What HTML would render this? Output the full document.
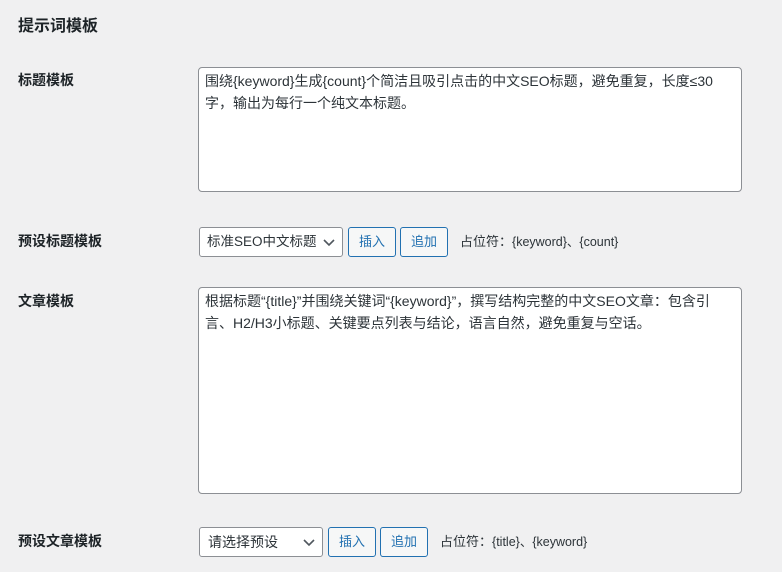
<!DOCTYPE html>
<html><head><meta charset="utf-8"><style>
body{margin:0;width:782px;height:572px;background:#f0f0f1;font-family:"Liberation Sans","Noto Sans CJK SC",sans-serif;color:#1d2327;position:relative;overflow:hidden}
.a{position:absolute;white-space:nowrap}
h2{position:absolute;left:18px;top:15px;margin:0;font-size:16px;font-weight:700;line-height:24px}
.l{font-size:14px;font-weight:700;line-height:20px;left:18px}
.ta{position:absolute;left:198px;width:530px;background:#fff;border:1px solid #8c8f94;border-radius:4px;padding:0 6px;font-size:14px;line-height:22px;color:#2c3338;box-sizing:content-box}
.sel{position:absolute;height:28px;border:1px solid #8c8f94;border-radius:3px;background:#fff;font-size:14px;line-height:28px;padding-left:8px;box-sizing:border-box;color:#2c3338}
.sel svg{position:absolute;right:7px;top:11px}
.btn{position:absolute;height:30px;width:48px;border:1px solid #2271b1;border-radius:3px;background:#f6f7f7;color:#2271b1;font-size:13px;line-height:28px;text-align:center;box-sizing:border-box}
.ph{font-size:13px;line-height:20px;color:#2c3338}
.ph span{font-size:12.5px}
</style></head><body>
<h2>提示词模板</h2>
<div class="a l" style="top:70px">标题模板</div>
<div class="ta" style="top:67px;padding-top:2px;height:121px">围绕{keyword}生成{count}个简洁且吸引点击的中文SEO标题，避免重复，长度≤30<br>字，输出为每行一个纯文本标题。</div>
<div class="a l" style="top:231px">预设标题模板</div>
<div class="sel" style="left:199px;top:227px;width:144px;height:30px;line-height:28px;padding-left:7px;font-size:13.5px">标准SEO中文标题<svg width="12" height="8" viewBox="0 0 12 8"><path d="M1 1l5 5 5-5" stroke="#50575e" stroke-width="1.6" fill="none"/></svg></div>
<div class="btn" style="left:348px;top:227px">插入</div>
<div class="btn" style="left:400px;top:227px">追加</div>
<div class="a ph" style="left:460px;top:232px">占位符：<span>{keyword}、{count}</span></div>
<div class="a l" style="top:291px">文章模板</div>
<div class="ta" style="top:287px;padding-top:2px;height:203px">根据标题“{title}”并围绕关键词“{keyword}”，撰写结构完整的中文SEO文章：包含引<br>言、H2/H3小标题、关键要点列表与结论，语言自然，避免重复与空话。</div>
<div class="a l" style="top:531px">预设文章模板</div>
<div class="sel" style="left:199px;top:527px;width:124px;height:30px;line-height:28px">请选择预设<svg width="12" height="8" viewBox="0 0 12 8"><path d="M1 1l5 5 5-5" stroke="#50575e" stroke-width="1.6" fill="none"/></svg></div>
<div class="btn" style="left:328px;top:527px">插入</div>
<div class="btn" style="left:380px;top:527px">追加</div>
<div class="a ph" style="left:440px;top:532px">占位符：<span>{title}、{keyword}</span></div>
</body></html>
